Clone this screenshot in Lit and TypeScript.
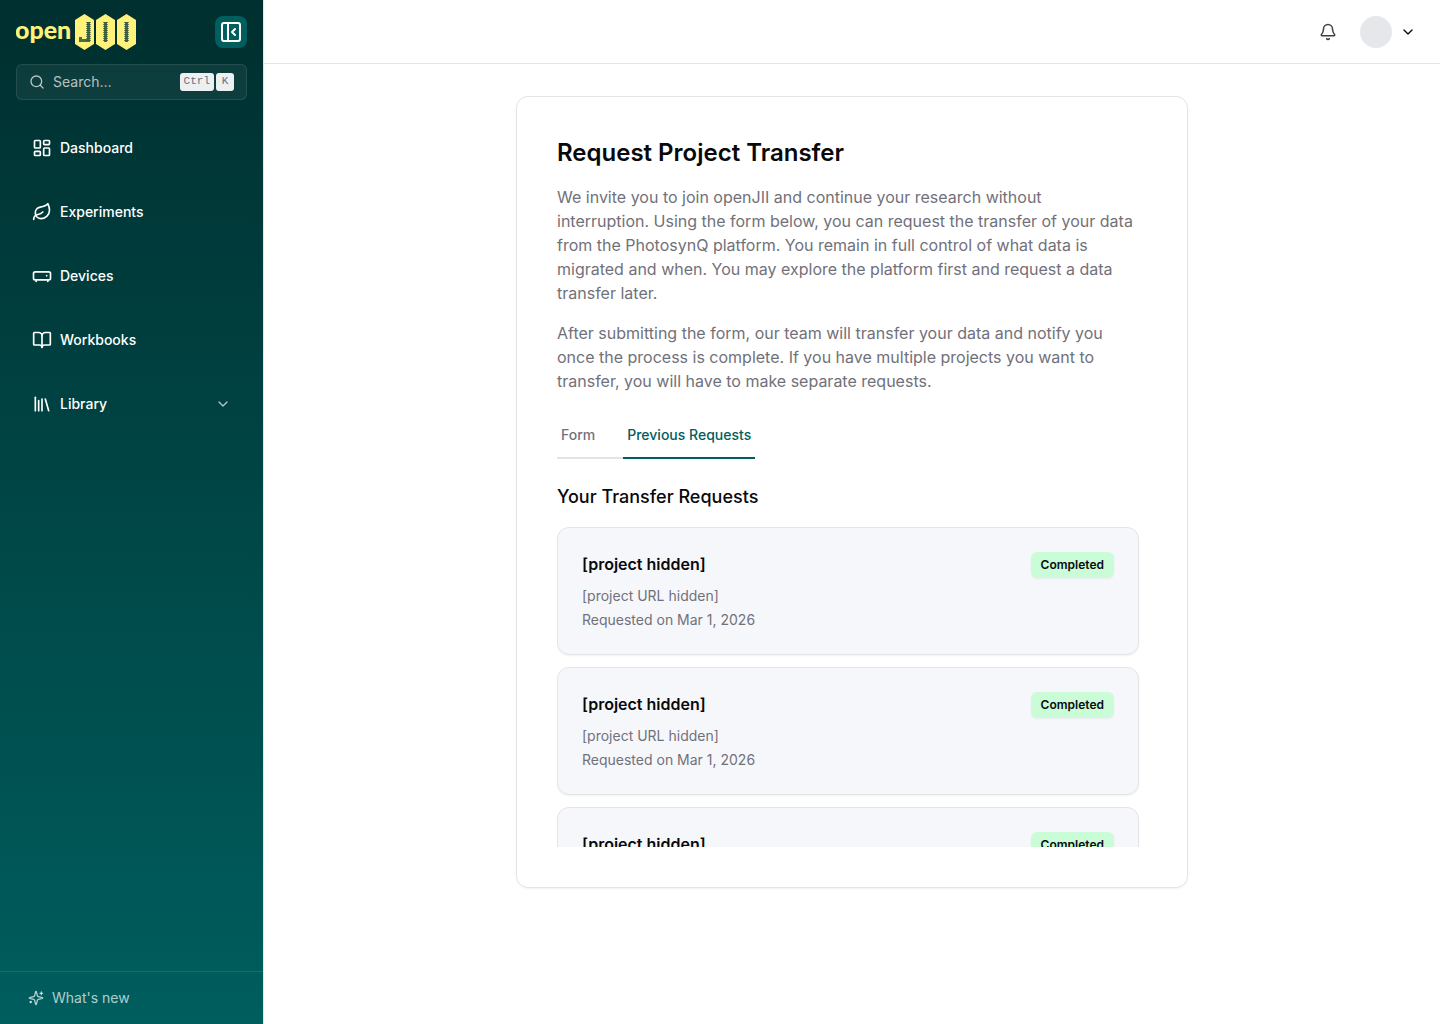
import { LitElement, html, css, svg } from "lit";
import { customElement, property, state } from "lit/decorators.js";

const icons: Record<string, unknown> = {
  dashboard: svg`<rect width="7" height="9" x="3" y="3" rx="1"/><rect width="7" height="5" x="14" y="3" rx="1"/><rect width="7" height="9" x="14" y="12" rx="1"/><rect width="7" height="5" x="3" y="16" rx="1"/>`,
  leaf: svg`<path d="M11 20A7 7 0 0 1 9.8 6.1C15.5 5 17 4.48 19 2c1 2 2 4.18 2 8 0 5.5-4.78 10-10 10Z"/><path d="M2 21c0-3 1.85-5.36 5.08-6C9.5 14.52 12 13 13 12"/>`,
  device: svg`<rect width="20.4" height="9.6" x="1.8" y="7" rx="2"/><path d="M5 17v1.6M19 17v1.6M17.6 11.6h.01"/>`,
  book: svg`<path d="M12 7v14"/><path d="M3 18a1 1 0 0 1-1-1V4a1 1 0 0 1 1-1h5a4 4 0 0 1 4 4 4 4 0 0 1 4-4h5a1 1 0 0 1 1 1v13a1 1 0 0 1-1 1h-6a3 3 0 0 0-3 3 3 3 0 0 0-3-3z"/>`,
  library: svg`<path d="m16 6 4 14"/><path d="M12 6v14"/><path d="M8 8v12"/><path d="M4 4v16"/>`,
  chevron: svg`<path d="m6 9 6 6 6-6"/>`,
  search: svg`<circle cx="11" cy="11" r="8"/><path d="m21 21-4.3-4.3"/>`,
  panel: svg`<rect width="18" height="18" x="3" y="3" rx="2"/><path d="M9 3v18"/><path d="m16 15-3-3 3-3"/>`,
  bell: svg`<path d="M10.268 21a2 2 0 0 0 3.464 0"/><path d="M3.262 15.326A1 1 0 0 0 4 17h16a1 1 0 0 0 .74-1.673C19.41 13.956 18 12.499 18 8A6 6 0 0 0 6 8c0 4.499-1.411 5.956-2.738 7.326"/>`,
  sparkles: svg`<path d="M9.937 15.5A2 2 0 0 0 8.5 14.063l-6.135-1.582a.5.5 0 0 1 0-.962L8.5 9.936A2 2 0 0 0 9.937 8.5l1.582-6.135a.5.5 0 0 1 .963 0L14.063 8.5A2 2 0 0 0 15.5 9.937l6.135 1.581a.5.5 0 0 1 0 .964L15.5 14.063a2 2 0 0 0-1.437 1.437l-1.582 6.135a.5.5 0 0 1-.963 0z"/><path d="M20 3v4"/><path d="M22 5h-4"/><path d="M4 17v2"/><path d="M5 18H3"/>`,
};

@customElement("ui-icon")
class UiIcon extends LitElement {
  static styles = css`
    :host { display: inline-flex; flex: none; width: 20px; height: 20px; }
    .glyph {
      width: 100%; height: 100%; fill: none; stroke: currentColor;
      stroke-width: 2; stroke-linecap: round; stroke-linejoin: round;
    }
  `;
  @property() name = "";
  render() {
    return html`<svg class="glyph" viewBox="0 0 24 24" aria-hidden="true">${icons[this.name]}</svg>`;
  }
}

@customElement("brand-logo")
class BrandLogo extends LitElement {
  static styles = css`
    :host { display: block; }
    .mark { display: block; width: 120px; height: 36px; }
    .word { font: 900 25px "Lato", sans-serif; fill: #fff27a; }
    .cell { fill: #fff27a; }
    .core { fill: none; stroke: #4b6a45; stroke-width: 3; }
    .teeth { fill: none; stroke: #2b4f3c; stroke-width: 5; stroke-dasharray: 1 1; opacity: 0.65; }
  `;
  render() {
    return html`<svg class="mark" viewBox="0 0 120 36" role="img" aria-label="openJII">
      <text class="word" x="-1" y="25">open</text>
      ${[59, 80, 101].map((x) => svg`<path class="cell" d="M${x + 9.5} 0L${x + 19} 6V30L${x + 9.5} 36L${x} 30V6Z"/>`)}
      <path class="core" d="M72.5 8V26.5H64.5V23"/>
      <path class="teeth" d="M72.5 8V28"/>
      <path class="core" d="M89.5 8V28M110.5 8V28"/>
      <path class="teeth" d="M89.5 8V28M110.5 8V28"/>
    </svg>`;
  }
}

@customElement("side-bar")
class SideBar extends LitElement {
  static styles = css`
    :host {
      display: flex; flex-direction: column; box-sizing: border-box;
      border-right: 1px solid #e2e4e6; color: #fff;
      background: linear-gradient(180deg, #002f2f, #005e5e);
    }
    .top { display: flex; flex-direction: column; padding: 0 16px; }
    .brand { display: flex; align-items: center; justify-content: space-between; height: 64px; }
    .toggle {
      display: flex; align-items: center; justify-content: center; width: 32px; height: 32px;
      padding: 0; border: 0; border-radius: 8px; background: #005e5e; color: #fff; cursor: pointer;
    }
    .toggle ui-icon { width: 24px; height: 24px; }
    .search {
      display: flex; align-items: center; gap: 8px; height: 36px; padding: 0 12px; box-sizing: border-box;
      border: 1px solid rgb(255 255 255 / 0.1); border-radius: 6px; background: rgb(255 255 255 / 0.05);
      color: rgb(255 255 255 / 0.7); font: inherit; font-size: 14px; line-height: 20px; cursor: pointer;
    }
    .search ui-icon { width: 16px; height: 16px; }
    .keys { display: flex; gap: 2px; margin-left: auto; }
    .key {
      height: 18px; min-width: 18px; box-sizing: border-box; padding: 0 4px; border-radius: 3px;
      background: #edf0f2; color: #6c6f77; text-align: center;
      font: 11px/17px "Liberation Mono", monospace;
    }
    .nav { display: flex; flex-direction: column; gap: 16px; padding: 24px 16px; }
    .link {
      display: flex; align-items: center; gap: 8px; height: 48px; padding: 0 16px;
      color: inherit; text-decoration: none; font-size: 14px; line-height: 20px; font-weight: 500;
    }
    .link .more { width: 16px; height: 16px; margin-left: auto; opacity: 0.7; }
    .foot { margin-top: auto; padding: 8px 16px; border-top: 1px solid rgb(255 255 255 / 0.1); }
    .news {
      display: flex; align-items: center; gap: 8px; height: 36px; padding: 0 12px;
      color: rgb(255 255 255 / 0.7); text-decoration: none; font-size: 14px; line-height: 20px;
    }
    .news ui-icon { width: 16px; height: 16px; }
  `;
  private links = [
    { label: "Dashboard", icon: "dashboard" },
    { label: "Experiments", icon: "leaf" },
    { label: "Devices", icon: "device" },
    { label: "Workbooks", icon: "book" },
    { label: "Library", icon: "library", more: true },
  ];
  render() {
    return html`
      <div class="top">
        <div class="brand">
          <brand-logo></brand-logo>
          <button class="toggle" aria-label="Collapse sidebar"><ui-icon name="panel"></ui-icon></button>
        </div>
        <button class="search">
          <ui-icon name="search"></ui-icon>Search…
          <span class="keys"><kbd class="key">Ctrl</kbd><kbd class="key">K</kbd></span>
        </button>
      </div>
      <nav class="nav">
        ${this.links.map((l) => html`<a class="link" href="#">
          <ui-icon name=${l.icon}></ui-icon>${l.label}
          ${l.more ? html`<ui-icon class="more" name="chevron"></ui-icon>` : ""}
        </a>`)}
      </nav>
      <div class="foot"><a class="news" href="#"><ui-icon name="sparkles"></ui-icon>What's new</a></div>
    `;
  }
}

@customElement("request-card")
class RequestCard extends LitElement {
  static styles = css`
    :host {
      display: flex; flex-direction: column; gap: 4px; padding: 24px; flex: none;
      border: 1px solid #e4e4e7; border-radius: 12px; background: #f6f7fa;
      box-shadow: 0 1px 2px rgb(0 0 0 / 0.05);
    }
    .head { display: flex; justify-content: space-between; align-items: flex-start; margin-bottom: 4px; }
    .name { margin: 0; font-size: 16px; line-height: 24px; font-weight: 600; color: #09090b; }
    .badge {
      padding: 5px 10px; border-radius: 6px; background: #cbfcd8; color: #09090b;
      font-size: 12px; line-height: 16px; font-weight: 600; box-shadow: 0 1px 2px rgb(0 0 0 / 0.05);
    }
    .line { margin: 0; font-size: 14px; line-height: 20px; color: #71717a; }
  `;
  @property() name = "";
  @property() url = "";
  @property() date = "";
  @property() status = "";
  render() {
    return html`
      <div class="head"><h4 class="name">${this.name}</h4><span class="badge">${this.status}</span></div>
      <p class="line">${this.url}</p>
      <p class="line">Requested on ${this.date}</p>
    `;
  }
}

@customElement("app-root")
class AppRoot extends LitElement {
  static styles = css`
    :host {
      display: grid; grid-template-columns: 264px minmax(0, 1fr); min-height: 100vh;
      background: #fff; color: #09090b; font-family: "Inter", "Liberation Sans", sans-serif;
    }
    .page { display: flex; flex-direction: column; }
    .bar {
      display: flex; align-items: center; justify-content: flex-end; gap: 16px;
      height: 64px; box-sizing: border-box; padding: 0 24px; border-bottom: 1px solid #e4e4e7;
    }
    .icon-btn, .account {
      display: flex; align-items: center; justify-content: center; padding: 0; border: 0;
      background: none; color: #3f3f46; cursor: pointer;
    }
    .icon-btn { width: 32px; height: 32px; }
    .icon-btn ui-icon { width: 18px; height: 18px; }
    .account { gap: 8px; color: #09090b; }
    .account ui-icon { width: 16px; height: 16px; }
    .avatar { width: 32px; height: 32px; border-radius: 50%; background: #e5e7eb; }
    .main { padding: 32px; }
    .panel {
      max-width: 672px; margin: 0 auto; box-sizing: border-box; padding: 40px;
      border: 1px solid #e4e4e7; border-radius: 12px; box-shadow: 0 1px 2px rgb(0 0 0 / 0.05);
    }
    .title { margin: 0 0 16px; font-size: 24px; line-height: 32px; font-weight: 600; }
    .text { margin: 0 0 16px; padding-right: 12px; font-size: 16px; line-height: 24px; color: #71717a; }
    .tabs { display: inline-flex; margin-top: 2px; gap: 24px; box-shadow: inset 0 -2px #e4e4e7; }
    .tab {
      height: 48px; padding: 2px 4px 0; border: 0; border-bottom: 2px solid transparent; background: none;
      color: #71717a; font: 500 14px/20px "Inter", "Liberation Sans", sans-serif; cursor: pointer;
    }
    .tab[aria-selected="true"] { color: #005e5e; border-color: #005e5e; }
    .subtitle { margin: 24px 0 16px; font-size: 18px; line-height: 28px; font-weight: 500; }
    .list {
      display: flex; flex-direction: column; gap: 12px; max-height: 320px; padding-right: 8px;
      overflow-y: auto; scrollbar-width: none;
    }
  `;
  @state() private tab = "Previous Requests";
  private requests = Array.from({ length: 3 }, () => ({
    name: "[project hidden]", url: "[project URL hidden]", date: "Mar 1, 2026", status: "Completed",
  }));
  render() {
    return html`
      <side-bar></side-bar>
      <div class="page">
        <header class="bar">
          <button class="icon-btn" aria-label="Notifications"><ui-icon name="bell"></ui-icon></button>
          <button class="account" aria-label="Account"><span class="avatar"></span><ui-icon name="chevron"></ui-icon></button>
        </header>
        <main class="main">
          <section class="panel">
            <h1 class="title">Request Project Transfer</h1>
            <p class="text">We invite you to join openJII and continue your research without interruption. Using the form below, you can request the transfer of your data from the PhotosynQ platform. You remain in full control of what data is migrated and when. You may explore the platform first and request a data transfer later.</p>
            <p class="text">After submitting the form, our team will transfer your data and notify you once the process is complete. If you have multiple projects you want to transfer, you will have to make separate requests.</p>
            <div class="tabs" role="tablist">
              ${["Form", "Previous Requests"].map((t) => html`<button class="tab" role="tab"
                aria-selected=${this.tab === t ? "true" : "false"} @click=${() => (this.tab = t)}>${t}</button>`)}
            </div>
            <h2 class="subtitle">Your Transfer Requests</h2>
            <div class="list">
              ${this.requests.map((r) => html`<request-card name=${r.name} url=${r.url} date=${r.date} status=${r.status}></request-card>`)}
            </div>
          </section>
        </main>
      </div>
    `;
  }
}
